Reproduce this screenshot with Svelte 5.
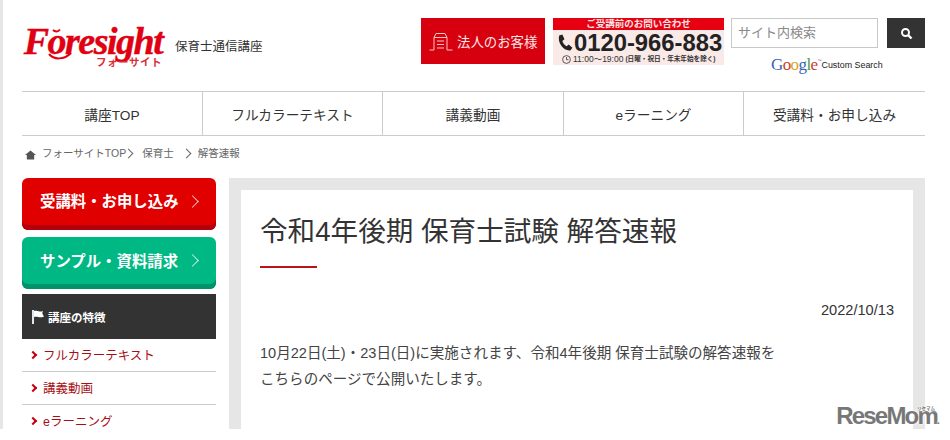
<script>
  const nav = ['講座TOP', 'フルカラーテキスト', '講義動画', 'eラーニング', '受講料・お申し込み'];
  const side = ['フルカラーテキスト', '講義動画', 'eラーニング'];
</script>

<div class="page">
  <header class="top">
    <div class="brand">
      <div class="logo">
        <span class="logo-word">Foresight</span>
        <svg class="swoosh" width="30" height="34" viewBox="0 0 30 34" fill="none" stroke="#e00012" stroke-width="2">
          <path d="M7 3c2 2 5 2 7-.5" />
          <path d="M3 27c5 6 15 6 22-1" />
        </svg>
        <span class="logo-kana">フォーサイト</span>
      </div>
      <span class="course">保育士通信講座</span>
    </div>
    <div class="actions">
      <a class="corp" href="#corp">
        <svg width="24" height="19" viewBox="0 0 24 19" fill="none" stroke="#f6c4c4" stroke-width="1">
          <path d="M.5 18H5V5.500L7 1.500h9l2 4V18h5.500M5 5.500h13M8 9h7M8 12.500h7M8 16h7" />
        </svg>
        法人のお客様
      </a>
      <div class="tel">
        <div class="tel-head">ご受講前のお問い合わせ</div>
        <div class="tel-num">
          <svg width="16" height="18" viewBox="0 0 15 17"><path d="M2 1.500 5 .5l2 4.500-2 1.500c.5 2 2 4 4 5l2-1.500 3.500 3-2 2.500C7 16.500 0 9 2 1.500z" fill="#222" /></svg>
          0120-966-883
        </div>
        <div class="tel-note">
          <svg width="9" height="9" viewBox="0 0 9 9" fill="none" stroke="#333" stroke-width=".8"><circle cx="4.500" cy="4.500" r="3.900" /><path d="M4.500 2v2.700h2" /></svg>
          11:00～19:00 <small>(日曜・祝日・年末年始を除く)</small>
        </div>
      </div>
      <div class="search">
        <div class="search-row">
          <div class="search-input">サイト内検索</div>
          <button class="search-btn" aria-label="検索">
            <svg width="13" height="13" viewBox="0 0 13 13" fill="none" stroke="#fff"><circle cx="5.500" cy="5.500" r="3.500" stroke-width="2" /><path d="M8 8l3.500 3.500" stroke-width="2.400" /></svg>
          </button>
        </div>
        <div class="google">
          <span class="g-word"><b class="b">G</b><b class="r">o</b><b class="y">o</b><b class="b">g</b><b class="g">l</b><b class="r">e</b></span><sup>™</sup>
          <span class="custom">Custom Search</span>
        </div>
      </div>
    </div>
  </header>

  <nav class="nav">
    {#each nav as item}
      <a href="#nav">{item}</a>
    {/each}
  </nav>

  <div class="crumbs">
    <svg width="11" height="10" viewBox="0 0 12 10" fill="#555"><path d="M6 0 12 5H10V10H2V5H0z" /></svg>
    <span>フォーサイトTOP</span><i class="chev"></i>
    <span>保育士</span><i class="chev wide"></i>
    <span>解答速報</span>
  </div>

  <div class="columns">
    <aside class="sidebar">
      <a class="cta red" href="#apply">受講料・お申し込み<i></i></a>
      <a class="cta green" href="#sample">サンプル・資料請求<i></i></a>
      <div class="side-head">
        <svg width="14" height="14" viewBox="0 0 14 14"><path d="M1 0h2v14H1z" fill="#dfe8f0" /><path d="M3 1c3-1 4 1.500 9 0-1 2-1 3 1 5.500-5 2-6-.5-10 .5z" fill="#fff" /></svg>
        講座の特徴
      </div>
      <ul class="side-list">
        {#each side as item}
          <li><a href="#side">{item}</a></li>
        {/each}
      </ul>
    </aside>

    <main class="panel">
      <article class="card">
        <h1>令和4年後期 保育士試験 解答速報</h1>
        <div class="rule"></div>
        <p class="date">2022/10/13</p>
        <p class="body">10月22日(土)・23日(日)に実施されます、令和4年後期 保育士試験の解答速報を<br />こちらのページで公開いたします。</p>
      </article>
    </main>
  </div>

  <div class="watermark"><span class="kana">リセマム</span>ReseMom<em>.</em></div>
</div>

<style>
  :global(body) {
    margin: 0;
    background: #fff;
  }
  .page {
    position: relative;
    box-sizing: border-box;
    width: 950px;
    height: 429px;
    overflow: hidden;
    padding: 0 0 0 22px;
    border-left: 3px solid #e6e6e6;
    margin-bottom: 11px;
    font-family: "Liberation Sans", "Noto Sans CJK JP", sans-serif;
    color: #333;
    background: #fff;
  }
  a {
    text-decoration: none;
    color: inherit;
  }

  .top {
    display: flex;
    justify-content: space-between;
    width: 903px;
    height: 91px;
    margin-left: -3px;
  }
  .brand {
    display: flex;
    align-items: flex-start;
    padding-top: 25px;
    gap: 11px;
  }
  .logo {
    position: relative;
    display: flex;
    flex-direction: column;
    align-items: center;
    width: 142px;
  }
  .logo-word {
    font-family: "Liberation Serif", serif;
    font-weight: 700;
    font-style: italic;
    font-size: 38px;
    line-height: 32px;
    letter-spacing: -1.500px;
    color: #e00012;
    -webkit-text-stroke: .4px #e00012;
  }
  .swoosh {
    position: absolute;
    left: 24px;
    top: 2px;
  }
  .logo-kana {
    font-size: 10.500px;
    font-weight: 700;
    line-height: 11px;
    letter-spacing: .5px;
    color: #d8303a;
    margin-left: 72px;
  }
  .course {
    font-size: 12.500px;
    line-height: 16px;
    margin-top: 14px;
  }
  .actions {
    display: flex;
    align-items: flex-start;
    padding-top: 18px;
  }
  .corp {
    display: flex;
    align-items: center;
    gap: 4px;
    box-sizing: border-box;
    width: 124px;
    height: 46px;
    padding-left: 8px;
    background: #d7000f;
    color: #fbe5e5;
    font-size: 13.400px;
  }
  .tel {
    box-sizing: border-box;
    width: 171px;
    height: 47px;
    margin: 0 7px 0 8px;
    background: #f9e9e7;
    color: #222;
  }
  .tel-head {
    height: 12px;
    margin-bottom: 1px;
    background: #e60012;
    color: #fbe3e3;
    font-size: 9.500px;
    font-weight: 700;
    line-height: 12px;
    text-align: center;
  }
  .tel-num {
    display: flex;
    align-items: center;
    gap: 1px;
    height: 23px;
    padding-left: 4px;
    font-size: 23.800px;
    font-weight: 700;
    line-height: 23px;
    white-space: nowrap;
  }
  .tel-note {
    display: flex;
    align-items: center;
    gap: 2px;
    padding-left: 9px;
    font-size: 8.500px;
    line-height: 10px;
    white-space: nowrap;
    color: #333;
  }
  .tel-note small {
    font-size: 6.600px;
    font-weight: 700;
  }
  .search {
    width: 194px;
  }
  .search-row {
    display: flex;
    gap: 9px;
  }
  .search-input {
    box-sizing: border-box;
    width: 147px;
    height: 30px;
    padding-left: 6px;
    border: 1px solid #c8c8c8;
    color: #8a8a8a;
    font-size: 13px;
    line-height: 27px;
  }
  .search-btn {
    display: flex;
    align-items: center;
    justify-content: center;
    width: 38px;
    height: 30px;
    padding: 0;
    border: 0;
    background: #333;
  }
  .google {
    display: flex;
    align-items: center;
    margin: 6px 0 0 40px;
    white-space: nowrap;
  }
  .g-word {
    font-family: "Liberation Serif", serif;
    font-size: 17px;
    line-height: 22px;
    letter-spacing: -.6px;
  }
  .g-word b {
    font-weight: 400;
  }
  .b { color: #3a62b5; }
  .r { color: #c8402e; }
  .y { color: #d9a520; }
  .g { color: #4f9a4b; }
  .google sup {
    font-size: 4px;
    line-height: 1;
    margin-bottom: 8px;
    color: #666;
  }
  .custom {
    margin-left: 0;
    font-size: 8.900px;
    color: #222;
  }

  .nav {
    display: grid;
    grid-template-columns: 180px 180px 181px 180px 182px;
    width: 903px;
    height: 45px;
    margin-left: -3px;
    box-sizing: border-box;
    border-top: 1px solid #ccc;
    border-bottom: 1px solid #ccc;
  }
  .nav a {
    display: flex;
    align-items: center;
    justify-content: center;
    font-size: 13.700px;
    color: #333;
    border-left: 1px solid #ccc;
  }
  .nav a:first-child {
    border-left: 0;
  }

  .crumbs {
    display: flex;
    align-items: center;
    box-sizing: border-box;
    height: 42px;
    padding-bottom: 10px;
    font-size: 10.500px;
    color: #666;
  }
  .crumbs svg {
    margin-right: 6px;
    margin-top: 5px;
  }
  .chev {
    width: 6px;
    height: 6px;
    margin: 3px 10px 0 -1px;
    border-top: 1px solid #666;
    border-right: 1px solid #666;
    transform: rotate(45deg);
  }
  .chev.wide {
    margin-left: 9px;
    margin-right: 8px;
  }

  .columns {
    display: flex;
    gap: 13px;
    margin-left: -3px;
  }
  .sidebar {
    width: 194px;
    flex: none;
  }
  .cta {
    position: relative;
    display: block;
    box-sizing: border-box;
    height: 52px;
    padding-left: 18px;
    border-radius: 6px;
    color: #fff;
    font-size: 15.400px;
    font-weight: 700;
    line-height: 48px;
    margin-bottom: 7px;
    white-space: nowrap;
  }
  .cta i {
    position: absolute;
    right: 19px;
    top: 19px;
    width: 8px;
    height: 8px;
    border-top: 1px solid #f3c0c0;
    border-right: 1px solid #f3c0c0;
    transform: rotate(45deg);
  }
  .red {
    background: #e00000;
    box-shadow: inset 0 -5px 0 #b5000c;
  }
  .green {
    background: #00b884;
    box-shadow: inset 0 -5px 0 #00936a;
    line-height: 50px;
  }
  .green i {
    border-color: #c5efe2;
  }
  .side-head {
    display: flex;
    align-items: center;
    gap: 3px;
    height: 45px;
    margin-top: -2px;
    padding-left: 9px;
    background: #333;
    color: #fff;
    font-size: 11.500px;
    font-weight: 700;
  }
  .side-list {
    list-style: none;
    margin: 0;
    padding: 0;
  }
  .side-list li {
    height: 33px;
    box-sizing: border-box;
    border-bottom: 1px solid #ccc;
  }
  .side-list li:last-child {
    border-bottom: 0;
  }
  .side-list a {
    display: flex;
    align-items: center;
    height: 31px;
    padding-left: 8px;
    color: #a80f14;
    font-size: 12.500px;
  }
  .side-list a::before {
    content: "";
    width: 4px;
    height: 4px;
    margin-right: 7px;
    border-top: 2px solid #c40010;
    border-right: 2px solid #c40010;
    transform: rotate(45deg);
  }

  .panel {
    box-sizing: border-box;
    width: 696px;
    height: 260px;
    padding: 12px 12px 0;
    background: #e6e6e6;
  }
  .card {
    box-sizing: border-box;
    height: 260px;
    padding: 25px 19px 0;
    background: #fff;
  }
  h1 {
    margin: 0;
    font-size: 27.600px;
    font-weight: 400;
    line-height: 34px;
    color: #333;
  }
  .rule {
    width: 57px;
    height: 2px;
    margin-top: 17px;
    background: #b8141a;
  }
  .date {
    margin: 33px 0 0;
    text-align: right;
    font-size: 14.600px;
    line-height: 18px;
  }
  .body {
    margin: 21px 0 0;
    font-size: 14.560px;
    line-height: 26px;
    color: #444;
  }

  .watermark {
    position: absolute;
    right: 12px;
    bottom: -5px;
    font-size: 24px;
    font-weight: 700;
    line-height: 26px;
    letter-spacing: -1.800px;
    color: #777;
    text-shadow: 0 0 3px #fff, 0 0 3px #fff;
  }
  .watermark em {
    font-size: 10px;
    font-style: normal;
  }
  .kana {
    position: absolute;
    right: 3px;
    top: 3px;
    font-size: 4.500px;
    line-height: 6px;
    letter-spacing: 0;
  }
</style>
